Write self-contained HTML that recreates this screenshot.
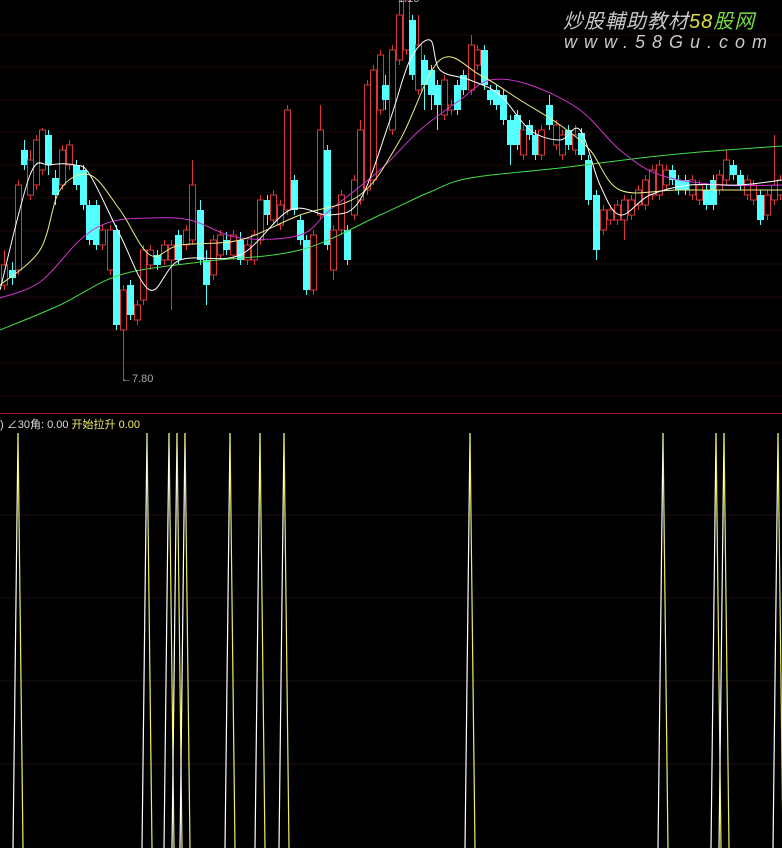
<!DOCTYPE html>
<html><head><meta charset="utf-8"><style>
html,body{margin:0;padding:0;background:#000;width:782px;height:848px;overflow:hidden}
#w{position:absolute;left:0;top:0}
.t{position:absolute;font-family:"Liberation Sans","Noto Sans CJK SC",sans-serif;white-space:nowrap}
</style></head><body>
<svg id="w" width="782" height="848" xmlns="http://www.w3.org/2000/svg"></svg>
<div class="t" style="left:0;top:416px;font-size:11px;color:#ddd">) ∠30角: 0.00 <span style="color:#ee6">开始拉升 0.00</span></div>
<div class="t" style="left:121px;top:373px;font-size:11px;color:#aaa">←7.80</div>
<div class="t" style="left:398px;top:-7px;font-size:11px;color:#bbb">1.10</div>
<div class="t" style="left:563px;top:5px;font-size:20px;color:#c8c8c8;font-style:italic;letter-spacing:1px">炒股輔助教材<span style="color:#dd4">58</span><span style="color:#7d4">股网</span></div>
<div class="t" style="left:564px;top:32px;font-size:18px;color:#c8c8c8;font-style:italic;letter-spacing:7px">www.58Gu.com</div>
<script>
var s='';
[35,67,100,132,165,198,231,264,297,330,363,396].forEach(function(y){s+='<line x1="0" y1="'+y+'" x2="782" y2="'+y+'" stroke="#1e0808" stroke-width="1"/>';});
[515,598,681,764].forEach(function(y){s+='<line x1="0" y1="'+y+'" x2="782" y2="'+y+'" stroke="#1a1010" stroke-width="1"/>';});
s+='<line x1="0" y1="413.5" x2="782" y2="413.5" stroke="#a01020" stroke-width="1"/>';
var c=[[4,'r',265,285,250,290],[12,'c',270,278,262,285],[18,'r',185,270,180,275],[24,'c',150,165,140,170],[30,'r',160,195,150,200],[36,'r',140,185,135,190],[42,'r',130,170,128,175],[48,'c',135,165,130,175],[55,'c',178,195,170,205],[62,'r',150,185,145,190],[69,'r',145,165,140,170],[76,'c',165,185,160,190],[83,'c',170,205,165,210],[89,'c',205,240,200,245],[96,'c',205,245,200,250],[102,'r',230,245,225,250],[110,'r',230,270,225,275],[116,'c',230,325,225,330],[123,'r',290,330,285,380],[130,'c',285,315,280,320],[137,'r',305,320,300,325],[143,'r',250,300,245,305],[150,'r',250,265,245,270],[157,'c',255,265,250,270],[164,'r',245,260,240,265],[171,'r',245,260,240,310],[178,'c',235,260,230,265],[186,'r',230,245,225,250],[192,'r',185,240,160,245],[200,'c',210,260,200,265],[206,'c',260,285,250,305],[213,'r',240,275,235,280],[220,'r',235,255,230,260],[226,'c',240,250,232,255],[233,'r',235,255,230,260],[240,'c',240,260,232,265],[247,'r',245,260,240,265],[254,'r',235,260,230,265],[260,'r',200,240,195,245],[267,'c',200,215,195,225],[273,'r',195,220,190,225],[280,'r',205,225,200,230],[287,'r',110,210,105,215],[294,'c',180,210,175,215],[300,'c',220,240,215,245],[306,'c',240,290,235,295],[313,'r',235,290,230,295],[320,'r',130,215,105,220],[327,'c',150,245,145,250],[333,'r',230,270,225,280],[341,'r',195,230,190,235],[347,'c',230,260,225,265],[354,'r',180,215,175,220],[360,'r',130,200,120,205],[367,'r',85,190,80,195],[373,'r',70,180,65,185],[380,'r',55,110,50,115],[385,'c',85,100,75,110],[392,'r',50,130,45,135],[399,'r',15,60,0,65],[406,'r',0,50,0,55],[412,'c',20,75,15,80],[418,'r',45,90,15,95],[424,'c',60,85,55,110],[431,'c',70,95,65,110],[437,'c',85,105,80,130],[444,'r',80,115,75,120],[451,'r',105,110,100,115],[457,'c',85,110,80,115],[463,'c',75,90,70,95],[471,'r',45,90,35,95],[477,'r',50,65,45,70],[484,'c',50,85,45,90],[490,'c',90,100,85,105],[496,'c',90,105,85,110],[503,'c',95,120,90,125],[510,'c',120,145,115,165],[517,'c',115,145,110,150],[523,'r',130,155,125,160],[529,'c',125,135,120,140],[535,'c',135,155,130,160],[541,'r',130,155,125,160],[549,'c',105,125,95,130],[556,'r',125,145,120,150],[562,'r',135,155,130,160],[568,'c',130,145,125,150],[575,'r',135,150,125,155],[581,'c',133,155,128,160],[588,'c',160,200,155,205],[596,'c',195,250,190,260],[603,'r',210,230,205,235],[610,'r',210,220,205,225],[617,'r',205,220,200,225],[624,'r',200,220,195,240],[631,'r',200,215,195,220],[638,'r',190,205,185,210],[645,'r',180,205,175,210],[652,'r',170,195,165,200],[659,'r',165,195,160,200],[666,'r',170,185,165,190],[672,'c',170,180,165,185],[678,'c',180,190,175,195],[685,'c',180,190,175,195],[692,'r',180,195,175,200],[699,'r',185,200,180,205],[706,'c',190,205,185,210],[713,'c',180,205,175,210],[719,'r',175,190,170,195],[726,'r',160,180,150,185],[733,'c',165,175,160,180],[740,'c',175,185,170,190],[747,'r',180,195,175,200],[753,'r',185,200,180,205],[760,'c',195,220,190,225],[767,'r',195,215,190,220],[774,'r',185,200,135,205],[780,'r',180,195,175,200]];
c.forEach(function(k){var x=k[0],col=k[1]=='r'?'#d83838':'#54ffff';
s+='<line x1="'+(x+.5)+'" y1="'+k[4]+'" x2="'+(x+.5)+'" y2="'+k[5]+'" stroke="'+col+'" stroke-width="1"/>';
if(k[1]=='r')s+='<rect x="'+(x-2.5)+'" y="'+k[2]+'" width="6" height="'+(k[3]-k[2])+'" fill="#000" stroke="'+col+'" stroke-width="1"/>';
else s+='<rect x="'+(x-3)+'" y="'+k[2]+'" width="7" height="'+Math.max(2,k[3]-k[2])+'" fill="'+col+'"/>';});
function pl(p,col){var d='M'+p[0][0]+','+p[0][1];
for(var i=0;i<p.length-1;i++){var p0=p[i>0?i-1:0],p1=p[i],p2=p[i+1],p3=p[i+2<p.length?i+2:i+1];
var c1x=p1[0]+(p2[0]-p0[0])/6,c1y=p1[1]+(p2[1]-p0[1])/6,c2x=p2[0]-(p3[0]-p1[0])/6,c2y=p2[1]-(p3[1]-p1[1])/6;
d+=' C'+c1x+','+c1y+' '+c2x+','+c2y+' '+p2[0]+','+p2[1];}
s+='<path fill="none" stroke="'+col+'" stroke-width="1" d="'+d+'"/>';}
pl([[0,330],[60,305],[120,275],[200,262],[300,250],[380,215],[430,192],[470,178],[560,168],[640,158],[700,152],[782,146]],'#44dd44');
pl([[0,298],[40,282],[80,240],[110,222],[150,218],[190,220],[240,238],[300,235],[330,210],[380,170],[420,130],[460,100],[490,80],[530,85],[580,110],[620,150],[660,175],[720,185],[782,185]],'#cc33cc');
pl([[0,285],[40,250],[60,190],[90,175],[120,210],[150,255],[180,245],[240,240],[300,215],[360,195],[400,140],[440,60],[480,75],[520,100],[560,125],[590,150],[620,190],[680,190],[782,190]],'#eeee88');
pl([[0,290],[30,175],[50,165],[75,165],[90,175],[120,235],[150,290],[180,260],[240,255],[290,210],[330,215],[360,200],[390,120],[410,60],[430,40],[440,70],[470,80],[500,95],[530,130],[560,140],[580,130],[600,185],[620,215],[650,195],[690,185],[740,185],[782,180]],'#ffffff');
[18,147,169,177,185,230,260,284,470,663,716,724,778].forEach(function(x,i){
s+='<line x1="'+x+'" y1="433" x2="'+(x-5)+'" y2="848" stroke="#ffffff" stroke-width="1.2"/>';
s+='<line x1="'+x+'" y1="433" x2="'+(x+5)+'" y2="848" stroke="#eeee66" stroke-width="1.2"/>';});
document.getElementById('w').innerHTML=s;
</script>
</body></html>
